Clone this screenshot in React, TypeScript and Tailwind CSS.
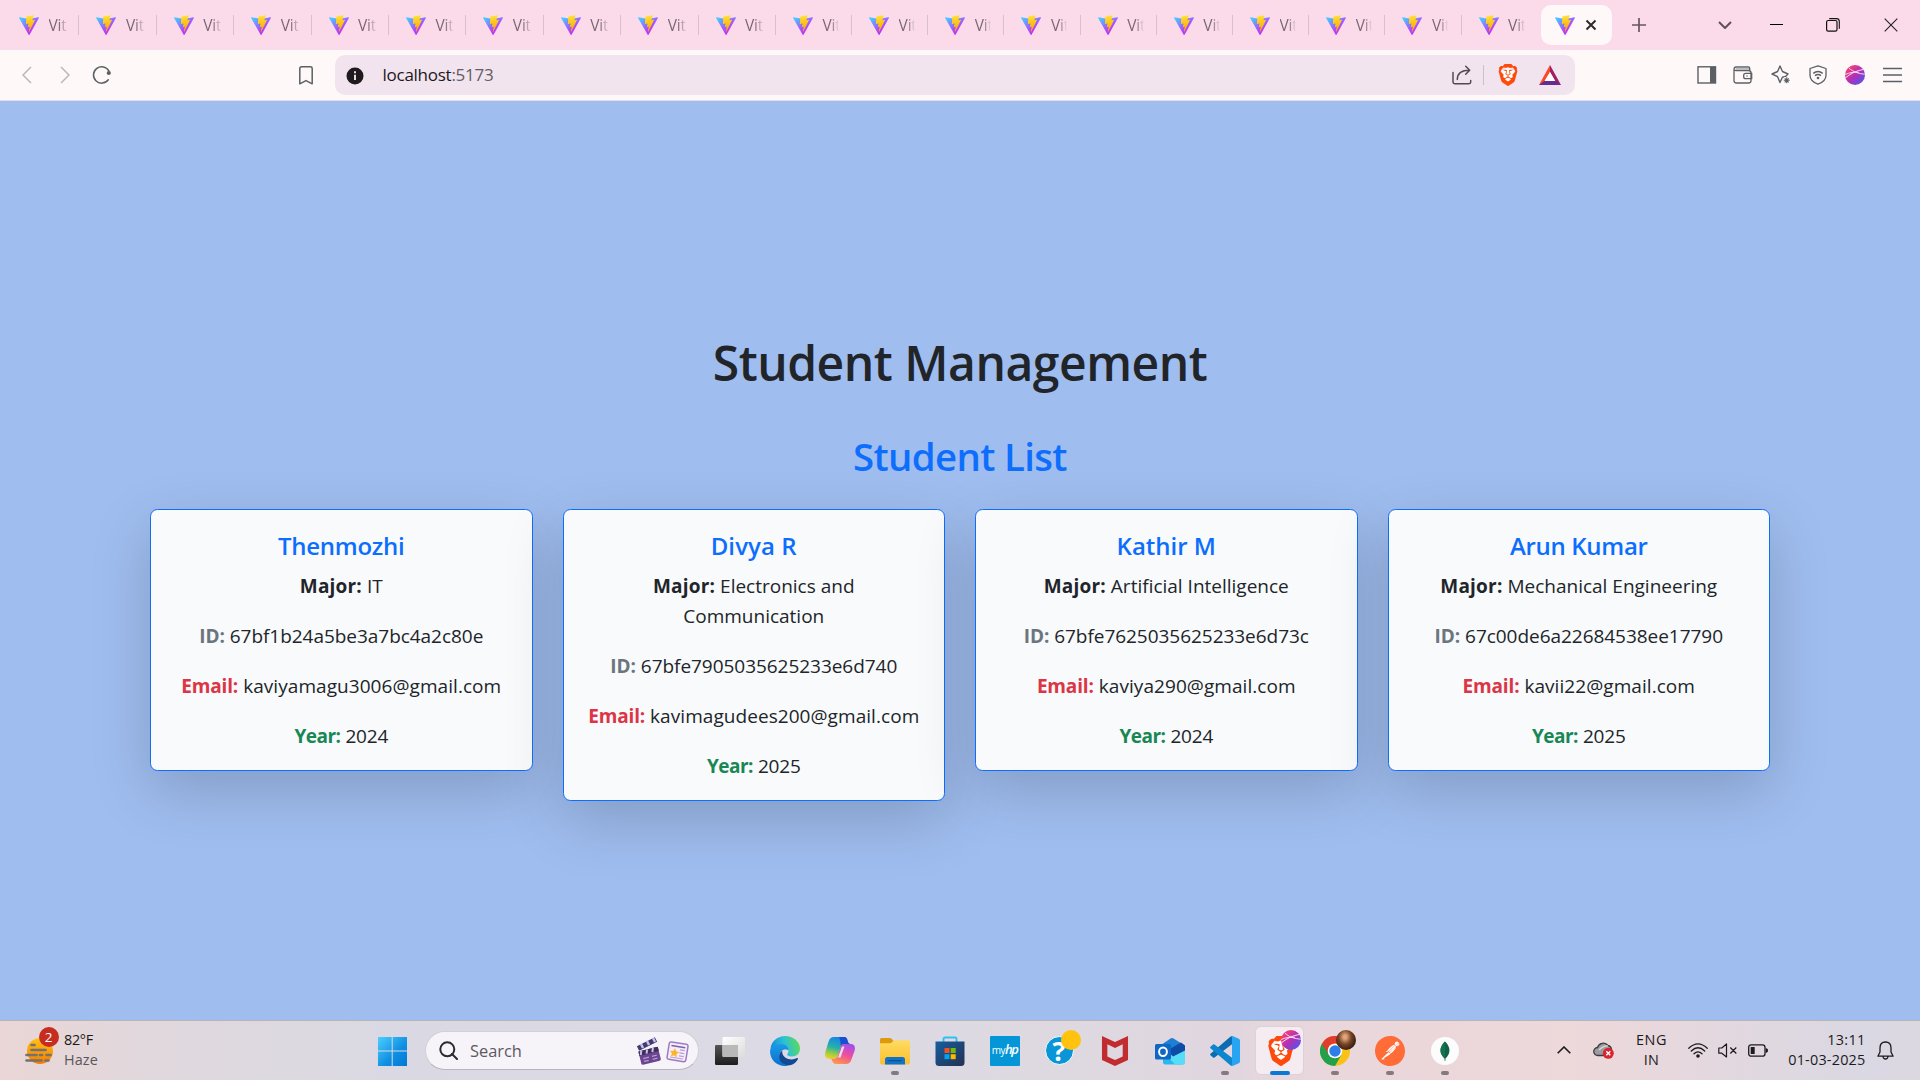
import type { ReactNode } from 'react';
import { SiBrave, SiPostman, SiMcafee } from 'react-icons/si';

/* ---------- tab strip ---------- */

function ViteLogo() {
  return (
    <svg viewBox="0 0 256 257" className="h-5 w-5 shrink-0">
      <defs>
        <linearGradient id="viteA" x1="-.8%" x2="57.6%" y1="7.7%" y2="78.4%">
          <stop offset="0" stopColor="#41D1FF" />
          <stop offset="1" stopColor="#BD34FE" />
        </linearGradient>
        <linearGradient id="viteB" x1="43.4%" x2="50.3%" y1="2.2%" y2="89%">
          <stop offset="0" stopColor="#FFEA83" />
          <stop offset=".083" stopColor="#FFDD35" />
          <stop offset="1" stopColor="#FFA800" />
        </linearGradient>
      </defs>
      <path
        fill="url(#viteA)"
        d="M255.153 37.938L134.897 252.976c-2.483 4.44-8.862 4.466-11.382.048L.875 37.958c-2.746-4.814 1.371-10.646 6.827-9.67l120.385 21.517a6.537 6.537 0 0 0 2.322-.004l117.867-21.483c5.438-.991 9.574 4.796 6.877 9.62Z"
      />
      <path
        fill="url(#viteB)"
        d="M185.432.063L96.44 17.501a3.268 3.268 0 0 0-2.634 3.014l-5.474 92.456a3.268 3.268 0 0 0 3.997 3.378l24.777-5.718c2.318-.535 4.413 1.507 3.936 3.838l-7.361 36.047c-.495 2.426 1.782 4.5 4.151 3.78l15.304-4.649c2.372-.72 4.652 1.36 4.15 3.788l-11.698 56.621c-.732 3.542 3.979 5.473 5.943 2.437l1.313-2.028l72.516-144.72c1.215-2.423-.88-5.186-3.54-4.672l-25.505 4.922c-2.396.462-4.435-1.77-3.759-4.114l16.646-57.705c.677-2.35-1.37-4.583-3.769-4.113Z"
      />
    </svg>
  );
}

function Tab({ narrow, last }: { narrow: boolean; last: boolean }) {
  return (
    <div className={`flex h-5 shrink-0 items-center border-r pl-[17px] ${narrow ? 'w-[76.2px]' : 'w-[77.4px]'} ${last ? 'border-transparent' : 'border-[#d9c0cf]'}`}>
      <ViteLogo />
      <span
        className={`mb-px ml-[9.5px] overflow-hidden whitespace-nowrap bg-linear-to-r from-[#75656f] from-50% to-[#75656f00] bg-clip-text text-[15.5px] leading-5 tracking-[-0.2px] text-transparent ${narrow ? 'w-[16.5px]' : 'w-[19px]'}`}
      >
        Vit
      </span>
    </div>
  );
}

function TabStrip() {
  return (
    <div className="flex h-[50px] items-center bg-[#fbdaea] pl-0.5">
      {Array.from({ length: 20 }, (_, i) => (
        <Tab key={i} narrow={i > 9} last={i === 19} />
      ))}
      <div className="ml-[3px] flex h-10 w-[71px] shrink-0 items-center rounded-[10px] bg-[#fef8f9] pl-3.5">
        <ViteLogo />
        <svg viewBox="0 0 12 12" className="ml-[10.5px] h-3 w-3" stroke="#2f2a2e" strokeWidth="2">
          <path d="M1.5 1.5l9 9M10.5 1.5l-9 9" />
        </svg>
      </div>
      <svg viewBox="0 0 14 14" className="ml-5 h-3.5 w-3.5" stroke="#66585f" strokeWidth="1.7">
        <path d="M7 0v14M0 7h14" />
      </svg>
      <div className="ml-auto flex items-center">
        <svg viewBox="0 0 14 8" className="h-2 w-3.5" fill="none" stroke="#5f5159" strokeWidth="2">
          <path d="M1 1l6 6 6-6" />
        </svg>
        <div className="ml-[38px] mb-0.5 h-px w-[13px] bg-black" />
        <svg viewBox="0 0 14 14" className="ml-[43px] h-3.5 w-3.5" fill="none" stroke="#111">
          <rect x=".6" y="2.5" width="10.4" height="10.7" rx="1.6" strokeWidth="1.2" />
          <path d="M3.2.6h7.3a2.8 2.8 0 0 1 2.8 2.8v7.4" strokeWidth="1.1" />
        </svg>
        <svg viewBox="0 0 14 14" className="ml-[44px] mr-[22px] h-3.5 w-3.5" stroke="#222" strokeWidth="1.1">
          <path d="M.7.7l12.6 12.6M13.3.7L.7 13.3" />
        </svg>
      </div>
    </div>
  );
}

/* ---------- toolbar ---------- */

function ProfileOrb({ className }: { className: string }) {
  return (
    <svg viewBox="0 0 20 20" className={className}>
      <defs>
        <linearGradient id="orb" x1="0" y1="0" x2="1" y2="1">
          <stop offset=".08" stopColor="#ff4468" />
          <stop offset=".5" stopColor="#b52fb5" />
          <stop offset=".95" stopColor="#4758f0" />
        </linearGradient>
        <clipPath id="orbClip">
          <circle cx="10" cy="10" r="10" />
        </clipPath>
      </defs>
      <g clipPath="url(#orbClip)">
        <rect width="20" height="20" fill="url(#orb)" />
        <path d="M4 3.2c4 3.5 9 5.6 17 6.1M0 13.2C5 9 11 5.5 19 4.3M0 9.5c5-2 9-2.5 14-2.3" stroke="#fbd9f0" strokeWidth="1" fill="none" />
      </g>
    </svg>
  );
}

function BraveMark({ className }: { className: string }) {
  return (
    <div className={`relative ${className}`}>
      <div className="absolute inset-[18%] rounded-full bg-white" />
      <SiBrave className="absolute inset-0 h-full w-full text-[#ff4a0c]" />
    </div>
  );
}

function Toolbar() {
  return (
    <div className="flex h-[51px] items-center border-b border-[#ecd9e2] bg-[#fef8f8]">
      <svg viewBox="0 0 10 18" className="ml-[22px] h-[18px] w-2.5" fill="none" stroke="#bcb5b9" strokeWidth="1.5">
        <path d="M9 1L1 9l8 8" />
      </svg>
      <svg viewBox="0 0 10 18" className="ml-[28px] h-[18px] w-2.5" fill="none" stroke="#bcb5b9" strokeWidth="1.5">
        <path d="M1 1l8 8-8 8" />
      </svg>
      <svg viewBox="0 0 20 20" className="ml-[22px] h-5 w-5" fill="none" stroke="#5b6066" strokeWidth="1.5">
        <path d="M16.3 14.8A8.2 8.2 0 1 1 17 6.2" strokeLinecap="round" />
        <circle cx="16.8" cy="8" r="2.1" fill="#5b6066" stroke="none" />
      </svg>
      <svg viewBox="0 0 14 19" className="ml-[187px] h-[19px] w-3.5" fill="none" stroke="#5b6066" strokeWidth="1.5" strokeLinejoin="round">
        <path d="M.8 2.5Q.8.8 2.5.8h9q1.7 0 1.7 1.7V17.8L7 14.6.8 17.8z" />
      </svg>
      <div className="ml-[22px] flex h-10 w-[1240px] items-center rounded-[10px] bg-[#f1e4ee]">
        <svg viewBox="0 0 18 18" className="ml-[11px] mt-px h-[18px] w-[18px]">
          <circle cx="9" cy="9" r="8.5" fill="#201a1e" />
          <path d="M9 4.3v2M9 7.8v5.2" stroke="#f1e4ee" strokeWidth="1.9" />
        </svg>
        <span className="mb-px ml-[18.5px] whitespace-nowrap text-[17px] leading-6 tracking-[-0.26px] text-[#1c171b]">
          localhost<span className="text-[#655b64]">:5173</span>
        </span>
        <svg viewBox="0 0 20 20" className="ml-auto h-5 w-5" fill="none" stroke="#55494f" strokeWidth="1.5" strokeLinecap="round" strokeLinejoin="round">
          <path d="M1 7.5V17q0 1.7 1.7 1.7H17q1.700 0 1.700-1.700v-1.500M5.300 14.500C5.300 8.500 9 5.300 17.500 5.300M13.700 1.200l4 4.100-4 4" />
        </svg>
        <div className="ml-[10.5px] h-5 w-px bg-[#cdbfca]" />
        <BraveMark className="ml-[13.5px] h-[22px] w-[22px]" />
        <svg viewBox="0 0 22 20" className="ml-[20px] mr-[14px] h-5 w-[22px]">
          <path d="M11 0v7L4.5 18 0 20z" fill="#ff4724" />
          <path d="M11 0l11 20-5-2L11 7z" fill="#9e1f63" />
          <path d="M0 20l5.2-4h11.6L22 20z" fill="#662d91" />
          <path d="M11 7l5.3 9H5.7z" fill="#fff" />
        </svg>
      </div>
      <div className="ml-auto mr-[18px] flex items-center text-[#5b6066]">
        <svg viewBox="0 0 20 18" className="h-[18px] w-5" fill="none" stroke="currentColor">
          <rect x="1" y=".8" width="17.5" height="16.2" strokeWidth="1.4" />
          <path d="M13 1h5.5v16H13z" fill="currentColor" stroke="none" />
        </svg>
        <svg viewBox="0 0 20 18" className="ml-[16.5px] h-[18px] w-5" fill="none" stroke="currentColor" strokeWidth="1.3">
          <path d="M1 3.5V14.5Q1 17 3.5 17h12q2.5 0 2.5-2.5V7q0-2.5-2.5-2.5H3Q1 4.5 1 2.900T3 1h12.500q1.200 0 1.200 1.500v2" />
          <path d="M3 2.800h13" strokeWidth="2" stroke="#b9babd" />
          <path d="M18.700 7.300h-6q-2 0-2 2v1.400q0 2 2 2h6zM13.500 10h1" />
        </svg>
        <svg viewBox="0 0 20 20" className="ml-[18px] h-5 w-5" fill="none" stroke="currentColor" strokeWidth="1.3" strokeLinejoin="round">
          <path d="M14.500 11.500L11.400 12.300 9 17.500 6.600 11.700 1 9l5.600-2.500L9 1l2.500 5.500L17 9z" strokeWidth="1.400" />
          <path d="M15.700 12v6.500M12.500 15.200h6.500" stroke="#fef8f8" strokeWidth="5" />
          <path d="M15.700 12.300v6M12.700 15.300h6M13.700 13.300l4 4M17.700 13.300l-4 4" strokeWidth="1.100" />
        </svg>
        <svg viewBox="0 0 20 20" className="ml-[17px] h-5 w-5" fill="none" stroke="currentColor" strokeWidth="1.3">
          <path d="M10 .8l8 2.700v6.700c0 4.200-3.500 7.300-8 9-4.500-1.700-8-4.800-8-9V3.500z" strokeLinejoin="round" />
          <path d="M5.300 8.300q4.700-3.600 9.400 0M7 10.700q3-2.200 6 0" strokeWidth="1.500" />
          <circle cx="10" cy="13" r="1.300" fill="currentColor" stroke="none" />
        </svg>
        <ProfileOrb className="ml-[17px] h-5 w-5" />
        <svg viewBox="0 0 19 16" className="ml-[18px] h-4 w-[19px]" stroke="currentColor" strokeWidth="1.4">
          <path d="M0 1.500h19M0 8h19M0 14.500h19" />
        </svg>
      </div>
    </div>
  );
}

/* ---------- page ---------- */

type Student = { name: string; nameTracking: string; major: string; id: string; email: string; year: string };

const students: Student[] = [
  { name: 'Thenmozhi', nameTracking: 'tracking-[-0.25px]', major: 'IT', id: '67bf1b24a5be3a7bc4a2c80e', email: 'kaviyamagu3006@gmail.com', year: '2024' },
  { name: 'Divya R', nameTracking: 'tracking-[0.1px]', major: 'Electronics and Communication', id: '67bfe7905035625233e6d740', email: 'kavimagudees200@gmail.com', year: '2025' },
  { name: 'Kathir M', nameTracking: 'tracking-[0px]', major: 'Artificial Intelligence', id: '67bfe7625035625233e6d73c', email: 'kaviya290@gmail.com', year: '2024' },
  { name: 'Arun Kumar', nameTracking: 'tracking-[-0.3px]', major: 'Mechanical Engineering', id: '67c00de6a22684538ee17790', email: 'kavii22@gmail.com', year: '2025' },
];

function StudentCard({ student }: { student: Student }) {
  return (
    <div className="w-[382.5px] rounded-[7.5px] border border-[#0d6efd] bg-[#f8fafc] px-5 pb-[19px] pt-[21px] text-center text-[19px] leading-[30px] text-[#212529] shadow-[0_20px_60px_rgba(0,0,0,0.175)]">
      <h5 className={`mb-2.5 text-[24px] font-semibold leading-[30px] text-[#0d6efd] ${student.nameTracking}`}>{student.name}</h5>
      <p className="mb-5">
        <strong className="tracking-[0.2px]">Major:</strong> {student.major}
      </p>
      <p className="mb-5 tracking-[-0.04px]">
        <strong className="text-[#6c757d]">ID:</strong> {student.id}
      </p>
      <p className="mb-5 tracking-[0.06px]">
        <strong className="tracking-[-0.15px] text-[#dc3545]">Email:</strong> {student.email}
      </p>
      <p>
        <strong className="tracking-[-0.5px] text-[#198754]">Year:</strong> <span className="tracking-[-0.2px]">{student.year}</span>
      </p>
    </div>
  );
}

function Page() {
  return (
    <main className="flex h-[919px] flex-col items-center bg-[#9fbdef] pt-[232px]">
      <h1 className="text-[48px] font-semibold leading-[60px] tracking-[-0.47px] text-[#212529]">Student Management</h1>
      <h2 className="mt-[39px] text-[38.4px] font-semibold leading-[48px] tracking-[-0.66px] text-[#0d6efd]">Student List</h2>
      <div className="mt-[29px] flex items-start gap-[30px]">
        {students.map((s) => (
          <StudentCard key={s.id} student={s} />
        ))}
      </div>
    </main>
  );
}

/* ---------- taskbar ---------- */

function AppSlot({ children, running, active }: { children: ReactNode; running?: boolean; active?: boolean }) {
  return (
    <div className="relative flex h-[59px] w-[55px] shrink-0 items-center justify-center">
      {active && <div className="absolute inset-x-[3px] inset-y-[5px] rounded-md border border-[#ddd0d8] bg-[#f5ecf1]" />}
      <div className="relative h-[30px] w-[30px]">{children}</div>
      {running && <div className="absolute bottom-[5px] h-1 w-2 rounded-full bg-[#84797f]" />}
      {active && <div className="absolute bottom-[5px] h-1 w-5 rounded-full bg-[#0a78d6]" />}
    </div>
  );
}

function WeatherWidget() {
  return (
    <div className="flex w-[377px] items-center pl-[25px] text-[14.4px] leading-5">
      <div className="relative mr-[9px] h-9 w-[30px]">
        <svg viewBox="0 0 30 36" className="h-9 w-[30px]">
          <defs>
            <linearGradient id="sun" x1="0" y1="0" x2="0" y2="1">
              <stop offset="0" stopColor="#ffc21a" />
              <stop offset="1" stopColor="#f57c00" />
            </linearGradient>
          </defs>
          <circle cx="15" cy="18" r="13" fill="url(#sun)" />
          <path d="M6.5 12h3M6.5 17h14M1.500 22h10M15 22h2M21.500 22h4M1.500 27.500h15M20.500 27.500h3" stroke="#74716f" strokeWidth="2.700" strokeLinecap="round" />
        </svg>
        <div className="absolute -top-[6px] left-[13.5px] flex h-5 w-5 items-center justify-center rounded-full bg-[#c72c20] text-[13.5px] text-white">2</div>
      </div>
      <div className="pb-0.5">
        <div className="tracking-[-0.3px] text-[#1a1a1a]">82°F</div>
        <div className="tracking-[0.1px] text-[#5b565c]">Haze</div>
      </div>
    </div>
  );
}

function SearchBox() {
  return (
    <div className="flex h-[39px] w-[274px] items-center rounded-full border border-[#d3ced8] border-b-[#b9b4bf] bg-[#f6f4f8] pl-[13px]">
      <svg viewBox="0 0 19 19" className="h-[19px] w-[19px]" fill="none" stroke="#2b2a2d" strokeWidth="2">
        <circle cx="8.3" cy="8.3" r="7" />
        <path d="M13 13l5 5" strokeLinecap="round" />
      </svg>
      <span className="ml-[12px] text-[16.4px] leading-6 text-[#5d595f]">Search</span>
      <svg viewBox="0 0 26 28" className="ml-auto h-7 w-[26px]">
        <g transform="rotate(-14 13 16)">
          <rect x="3" y="12" width="20" height="14" rx="1.5" fill="#6b4590" />
          <rect x="3" y="12" width="20" height="4.5" fill="#3f3059" />
          <path d="M6 12l-1.500 4M12 12l-1.500 4M18 12l-1.500 4" stroke="#c7c3f2" strokeWidth="2" />
          <path d="M6 20h6M6 23h5M15 20h5M15 23h5" stroke="#b79ad5" strokeWidth="1.3" />
        </g>
        <path d="M2 11.500L20 2.500" stroke="#453a68" strokeWidth="5" />
        <path d="M5 7l2 4M11 4l2 4M17 1l2 4" stroke="#bfc4f5" strokeWidth="2.5" />
      </svg>
      <svg viewBox="0 0 23 22" className="ml-[4px] mr-[9px] mt-0.5 h-[22px] w-[23px]">
        <g transform="rotate(9 11 11)">
          <rect x="2" y="2" width="19" height="17.500" rx="2" fill="#f5edfb" stroke="#9c7cc0" strokeWidth="1.5" />
          <path d="M4.500 5.500h14" stroke="#7e5fa8" strokeWidth="1.5" />
          <path d="M13.500 8.500h5M13.500 11.500h5M13.500 14.500h5M5 17h13" stroke="#b79fd2" strokeWidth="1.2" />
          <path d="M8.500 7.500l1.500 3 3.300.3-2.500 2.300.8 3.400-3.100-1.700-3 1.700.7-3.400-2.500-2.300 3.300-.3z" fill="#fdb32b" />
        </g>
      </svg>
    </div>
  );
}

function TaskbarApps() {
  return (
    <div className="ml-[3px] flex">
      <AppSlot>
        <svg viewBox="0 0 30 30">
          <defs>
            <linearGradient id="tvD" x1="0" y1="0" x2="0" y2="1"><stop offset="0" stopColor="#555" /><stop offset="1" stopColor="#1d1d1d" /></linearGradient>
            <linearGradient id="tvL" x1="0" y1="0" x2="1" y2="1"><stop offset="0" stopColor="#fff" /><stop offset="1" stopColor="#dcdcdc" /></linearGradient>
          </defs>
          <rect x="0" y="9" width="23" height="20" rx="1.3" fill="url(#tvD)" />
          <rect x="7.5" y="1" width="22.5" height="20" rx="1.3" fill="url(#tvL)" />
          <path d="M7.500 9H23v12H8.800q-1.300 0-1.300-1.300z" fill="#b9b9b9" />
        </svg>
      </AppSlot>
      <AppSlot>
        <svg viewBox="0 0 30 30">
          <defs>
            <linearGradient id="edgeT" x1="0" y1=".5" x2="1" y2=".3"><stop offset="0" stopColor="#1388dc" /><stop offset=".5" stopColor="#2cc1d4" /><stop offset="1" stopColor="#5fdc4f" /></linearGradient>
            <linearGradient id="edgeL" x1="0" y1="0" x2="0" y2="1"><stop offset="0" stopColor="#1a9be6" /><stop offset="1" stopColor="#0a6fd0" /></linearGradient>
          </defs>
          <path d="M.3 13C1.500 5 7.700 0 15 0c8.500 0 15 6 15 12.500 0 5-3.500 8-8 8-3.600 0-5.200-1.200-4.700-2.500.6-1 1.200-1.700 1.200-3.200 0-3-3-5.300-7.500-5.300-5 0-9 1.500-10.700 3.500z" fill="url(#edgeT)" />
          <path d="M0 15C.4 11 5 8 11 8c4.800 0 7.800 3 7.500 6.500-2-2-8.500-1.500-9 4.500-.5 5.500 4 10 9.500 10.500-1.300.4-2.600.5-4 .5C6.500 30 0 23.500 0 15z" fill="url(#edgeL)" />
          <path d="M12.300 14.500c-3.800 2.300-4.300 8-1 11.800 4 4.500 12.700 4.500 16.700-3.300.3-.8-.4-1.300-1-.9-6 3-13.500.5-14.700-5.100-.2-1 0-1.800 0-2.500z" fill="#114a93" />
        </svg>
      </AppSlot>
      <AppSlot>
        <svg viewBox="0 0 30 30">
          <defs>
            <linearGradient id="copA" x1=".4" y1="0" x2=".1" y2="1"><stop offset="0" stopColor="#1784e8" /><stop offset=".45" stopColor="#25b2a8" /><stop offset=".75" stopColor="#a4cd3c" /><stop offset="1" stopColor="#f5d51b" /></linearGradient>
            <linearGradient id="copB" x1=".8" y1="0" x2=".3" y2="1"><stop offset="0" stopColor="#a04df0" /><stop offset=".5" stopColor="#ee4f9d" /><stop offset="1" stopColor="#ff9a45" /></linearGradient>
          </defs>
          <path d="M14 1h5c2.500 0 3 1.500 3.700 4 .4 1.600 1 3 2.800 3h-6.300c-2 0-2.800 1.300-3.500 3.500L13 19c-1 2.700-2 3.700-4.500 3.700H4c-3.500 0-4.600-3-3.600-6.700l3-10C4.500 2.500 6 1 9 1z" fill="url(#copA)" />
          <path d="M14 1h5c2.500 0 3 1.500 3.700 4 .4 1.600 1 3 2.800 3h-6.300c-2 0-2.700 1-3.200 2.500-.5-4-1-8-2-9.500z" fill="#1a4fd0" />
          <path d="M16 28h-5c-2.500 0-3-1.500-3.700-3-.4-1.600-1-2.300-2.800-2.300h4.300c2.500 0 3.500-1.200 4.200-3.700l2.700-8c.7-2 1.500-3 3.500-3H26c3.500 0 4.600 3 3.600 6.700l-3 8.300c-1 3.500-2.600 5-5.600 5z" fill="url(#copB)" />
          <path d="M17 10.500h2.500l-4 11H13z" fill="#e8dff0" />
        </svg>
      </AppSlot>
      <AppSlot running>
        <svg viewBox="0 0 30 30">
          <defs>
            <linearGradient id="fold" x1="0" y1="0" x2="0" y2="1"><stop offset="0" stopColor="#ffdb62" /><stop offset="1" stopColor="#fbc02e" /></linearGradient>
          </defs>
          <path d="M0 3.500Q0 2 1.500 2h8.300q1 0 1.800.8L13.500 5v5H0z" fill="#dc9b0a" />
          <path d="M0 7.300h10q1 0 1.700-.7l1.600-1.600q.7-.7 1.700-.7h13.500q1.500 0 1.500 1.500V26.500q0 2-2 2H2q-2 0-2-2z" fill="url(#fold)" />
          <path d="M5 28.500v-5q0-2.500 2.500-2.500h15q2.500 0 2.500 2.500v5z" fill="#1372c6" />
          <path d="M9 24.700h12" stroke="#0c4f93" strokeWidth="1.3" strokeLinecap="round" />
        </svg>
      </AppSlot>
      <AppSlot>
        <svg viewBox="0 0 30 30">
          <defs>
            <linearGradient id="store" x1="0" y1="0" x2="1" y2="1"><stop offset="0" stopColor="#155f9f" /><stop offset="1" stopColor="#253052" /></linearGradient>
          </defs>
          <path d="M8.500 7V3q0-1.500 1.500-1.500h10q1.500 0 1.500 1.500v4" fill="none" stroke="#2cc1f3" strokeWidth="1.9" />
          <path d="M.5 5.500h29v21q0 3.500-3.500 3.500H4Q.5 30 .5 26.500z" fill="url(#store)" />
          <path d="M9.500 12h5v5h-5z" fill="#f25022" />
          <path d="M15.700 12h5v5h-5z" fill="#7fba00" />
          <path d="M9.500 18.200h5v5h-5z" fill="#00a4ef" />
          <path d="M15.700 18.200h5v5h-5z" fill="#ffb900" />
        </svg>
      </AppSlot>
      <AppSlot>
        <div className="flex h-[30px] w-[30px] items-center justify-center rounded-[1px] bg-[#0496d6] pb-0.5 leading-none text-white">
          <span className="text-[10px] tracking-[-0.5px]">my</span>
          <span className="text-[13px] font-semibold italic tracking-[-1.5px]">hp</span>
        </div>
      </AppSlot>
      <AppSlot>
        <div className="flex h-[29px] w-[29px] items-center justify-center rounded-full border-[1.5px] border-white bg-[#0a96d6] text-[27px] font-bold leading-none text-white">?</div>
        <div className="absolute -top-[6px] left-[16px] h-5 w-5 rounded-full bg-[#ffc20e]" />
      </AppSlot>
      <AppSlot>
        <SiMcafee className="h-[30px] w-[30px] text-[#c02c30]" />
      </AppSlot>
      <AppSlot>
        <svg viewBox="0 0 30 30">
          <path d="M6 9l9.500-6.500q1.500-.8 3 0L29 9 16 18H6z" fill="#1f7fd4" />
          <path d="M8 18l8-3 14-5.500V26q0 2.500-2.500 2.500h-17Q8 28.500 8 26z" fill="#2ab8ee" />
          <path d="M30 9.500V26q0 2.500-2.500 2.500H20L12 20z" fill="#58ddf8" />
          <path d="M12 14.500L26 6.500l4 3v5L18 20.500z" fill="#0f4ba5" />
          <rect x="0" y="8" width="16" height="15.500" rx="1.5" fill="#0f67c4" />
          <ellipse cx="8" cy="15.700" rx="3.900" ry="4.300" fill="none" stroke="#fff" strokeWidth="2" />
        </svg>
      </AppSlot>
      <AppSlot running>
        <svg viewBox="0 0 30 30">
          <path d="M22 0v8.200L4.500 21.500q-.8.600-1.500 0L.5 19.300q-.8-.8 0-1.600L20.300.7Q21 0 22 0z" fill="#0a6db3" />
          <path d="M22 30v-8.200L4.500 8.500Q3.700 8 3 8.500L.5 10.700q-.8.800 0 1.600l19.800 17q.7.700 1.700.7z" fill="#0c86ce" />
          <path d="M21.800.2q.6-.3 1.300 0l5.700 2.600q1.200.6 1.200 1.900v20.600q0 1.300-1.200 1.900l-5.700 2.600q-1.200.4-2.300-.7 1.200.5 1.200-1V2q0-1.500-1.200-1z" fill="#27a4f2" />
        </svg>
      </AppSlot>
      <AppSlot active>
        <BraveMark className="ml-px h-[30px] w-[30px]" />
        <ProfileOrb className="absolute -top-[6px] left-[16px] h-5 w-5" />
      </AppSlot>
      <AppSlot running>
        <svg viewBox="0 0 30 30">
          <circle cx="15" cy="15" r="15" fill="#fbc116" />
          <path d="M15 15L2 7.500A15 15 0 0 0 15 30l6.500-11.300z" fill="#22a04b" />
          <path d="M2 7.500A15 15 0 0 1 28 7.500H15a7.500 7.500 0 0 0-6.500 11.250z" fill="#e33b2e" />
          <path d="M2 7.500l6.500 11.250L15 22.500 13 28 4 25-1 12z" fill="none" />
          <circle cx="15" cy="15" r="7.300" fill="#fff" />
          <circle cx="15" cy="15" r="5.700" fill="#2f7de9" />
        </svg>
        <div className="absolute -top-[6px] left-[16px] h-5 w-5 rounded-full bg-radial-[at_45%_35%] from-[#e0a57c] from-10% via-[#7a4526] via-40% to-[#24140e] to-80%" />
      </AppSlot>
      <AppSlot running>
        <div className="absolute inset-[3px] rounded-full bg-white" />
        <SiPostman className="relative h-[30px] w-[30px] text-[#ff6c37]" />
      </AppSlot>
      <AppSlot running>
        <svg viewBox="0 0 30 30">
          <circle cx="15" cy="15" r="14" fill="#fcfcfc" />
          <path d="M15 5.500c4.500 4.200 5.500 9 3.500 13-1 2-2.300 3.200-3 4l-.2 2.500h-.6l-.2-2.500c-.7-.8-2-2-3-4-2-4-1-8.800 3.500-13z" fill="#116149" />
          <path d="M15 5.500c-4.500 4.200-5.500 9-3.500 13 1 2 2.300 3.200 3.500 4z" fill="#13734f" />
        </svg>
      </AppSlot>
    </div>
  );
}

function Tray() {
  return (
    <div className="ml-auto flex items-center text-[14.4px] leading-5 text-[#1c1a1d]">
      <svg viewBox="0 0 14 8" className="mb-px h-2 w-3.5" fill="none" stroke="#1c1a1d" strokeWidth="1.6">
        <path d="M.7 7.200L7 1l6.300 6.200" />
      </svg>
      <svg viewBox="0 0 21 17" className="ml-[22px] h-[17px] w-[21px]">
        <path d="M5 13.500a4 4 0 0 1-.5-8A6 6 0 0 1 15 3.500q3 .5 3.500 4l-4 6z" fill="#9c9ca0" stroke="#3c3b3e" strokeWidth="1.3" />
        <path d="M6 8q5-4.500 9-4" stroke="#dcdce0" strokeWidth="1.2" fill="none" />
        <circle cx="15.300" cy="11.300" r="5.500" fill="#d9252f" />
        <path d="M13.300 9.300l4 4M17.300 9.300l-4 4" stroke="#fff" strokeWidth="1.4" />
      </svg>
      <div className="ml-[20px] w-[36px] pb-px text-center">
        <div className="tracking-[0.5px]">ENG</div>
        <div className="tracking-[0.2px]">IN</div>
      </div>
      <svg viewBox="0 0 20 15" className="ml-[18px] h-[15px] w-5" fill="none" stroke="#1c1a1d" strokeWidth="1.3" strokeLinecap="round">
        <path d="M.8 5.300q9.200-8.800 18.400 0M3.300 8q6.700-6.400 13.400 0M6 10.700q4-3.600 8 0" />
        <circle cx="10" cy="13" r="1.800" fill="#1c1a1d" stroke="none" />
      </svg>
      <svg viewBox="0 0 20 15" className="ml-[10px] h-[15px] w-5" fill="none" stroke="#1c1a1d" strokeWidth="1.2" strokeLinejoin="round">
        <path d="M.8 5h3L8.500 1v13L3.800 10.200h-3zM12.300 4.500l6 6M18.300 4.500l-6 6" />
      </svg>
      <svg viewBox="0 0 20 13" className="ml-[10px] h-[13px] w-5">
        <rect x=".7" y=".8" width="16.300" height="11.400" rx="2.5" fill="none" stroke="#1c1a1d" strokeWidth="1.3" />
        <rect x="2.700" y="3" width="4" height="7" rx=".6" fill="#1c1a1d" />
        <path d="M18 4.500q2 .3 2 2t-2 2z" fill="#1c1a1d" stroke="#1c1a1d" strokeWidth=".6" />
      </svg>
      <div className="ml-[20px] w-[78px] whitespace-nowrap pb-0.5 text-right">
        <div className="tracking-[0.3px]">13:11</div>
        <div className="tracking-[0.22px]">01-03-2025</div>
      </div>
      <svg viewBox="0 0 17 19" className="ml-[11px] mr-[26.5px] h-[19px] w-[17px]" fill="none" stroke="#1c1a1d" strokeWidth="1.3" strokeLinejoin="round">
        <path d="M8.500 1q-5.500 0-5.500 6v4L.9 15.200h15.200L14 11V7q0-6-5.500-6zM6 15.500q.3 2.500 2.500 2.500t2.500-2.500" />
      </svg>
    </div>
  );
}

function Taskbar() {
  return (
    <div className="flex h-[60px] items-center border-t border-[#b9b3b8] bg-[linear-gradient(90deg,#ead6d6_0%,#e0d8dd_8%,#dad9e3_20%,#dcdae4_40%,#ded9e1_55%,#e0d6df_63%,#ead7db_70%,#edd8da_82%,#e2d8df_90%,#dad8e3_97%,#dcd8e2_100%)]">
      <WeatherWidget />
      <svg viewBox="0 0 30 30" className="mr-[18px] h-[30px] w-[30px] shrink-0">
        <defs>
          <linearGradient id="win" x1="0" y1="0" x2="30" y2="30" gradientUnits="userSpaceOnUse">
            <stop offset="0" stopColor="#4fd3ff" />
            <stop offset=".6" stopColor="#0f8fe2" />
            <stop offset="1" stopColor="#0078d4" />
          </linearGradient>
        </defs>
        <path d="M1 1h13.700v13.500H1zM15.700 1H30v13.500H15.700zM1 15.500h13.700V30H1zM15.700 15.500H30V30H15.700z" fill="url(#win)" />
      </svg>
      <SearchBox />
      <TaskbarApps />
      <Tray />
    </div>
  );
}

export default function App() {
  return (
    <div className="h-[1080px] w-[1920px] overflow-hidden font-['Open_Sans','Noto_Sans',sans-serif]">
      <TabStrip />
      <Toolbar />
      <Page />
      <Taskbar />
    </div>
  );
}
